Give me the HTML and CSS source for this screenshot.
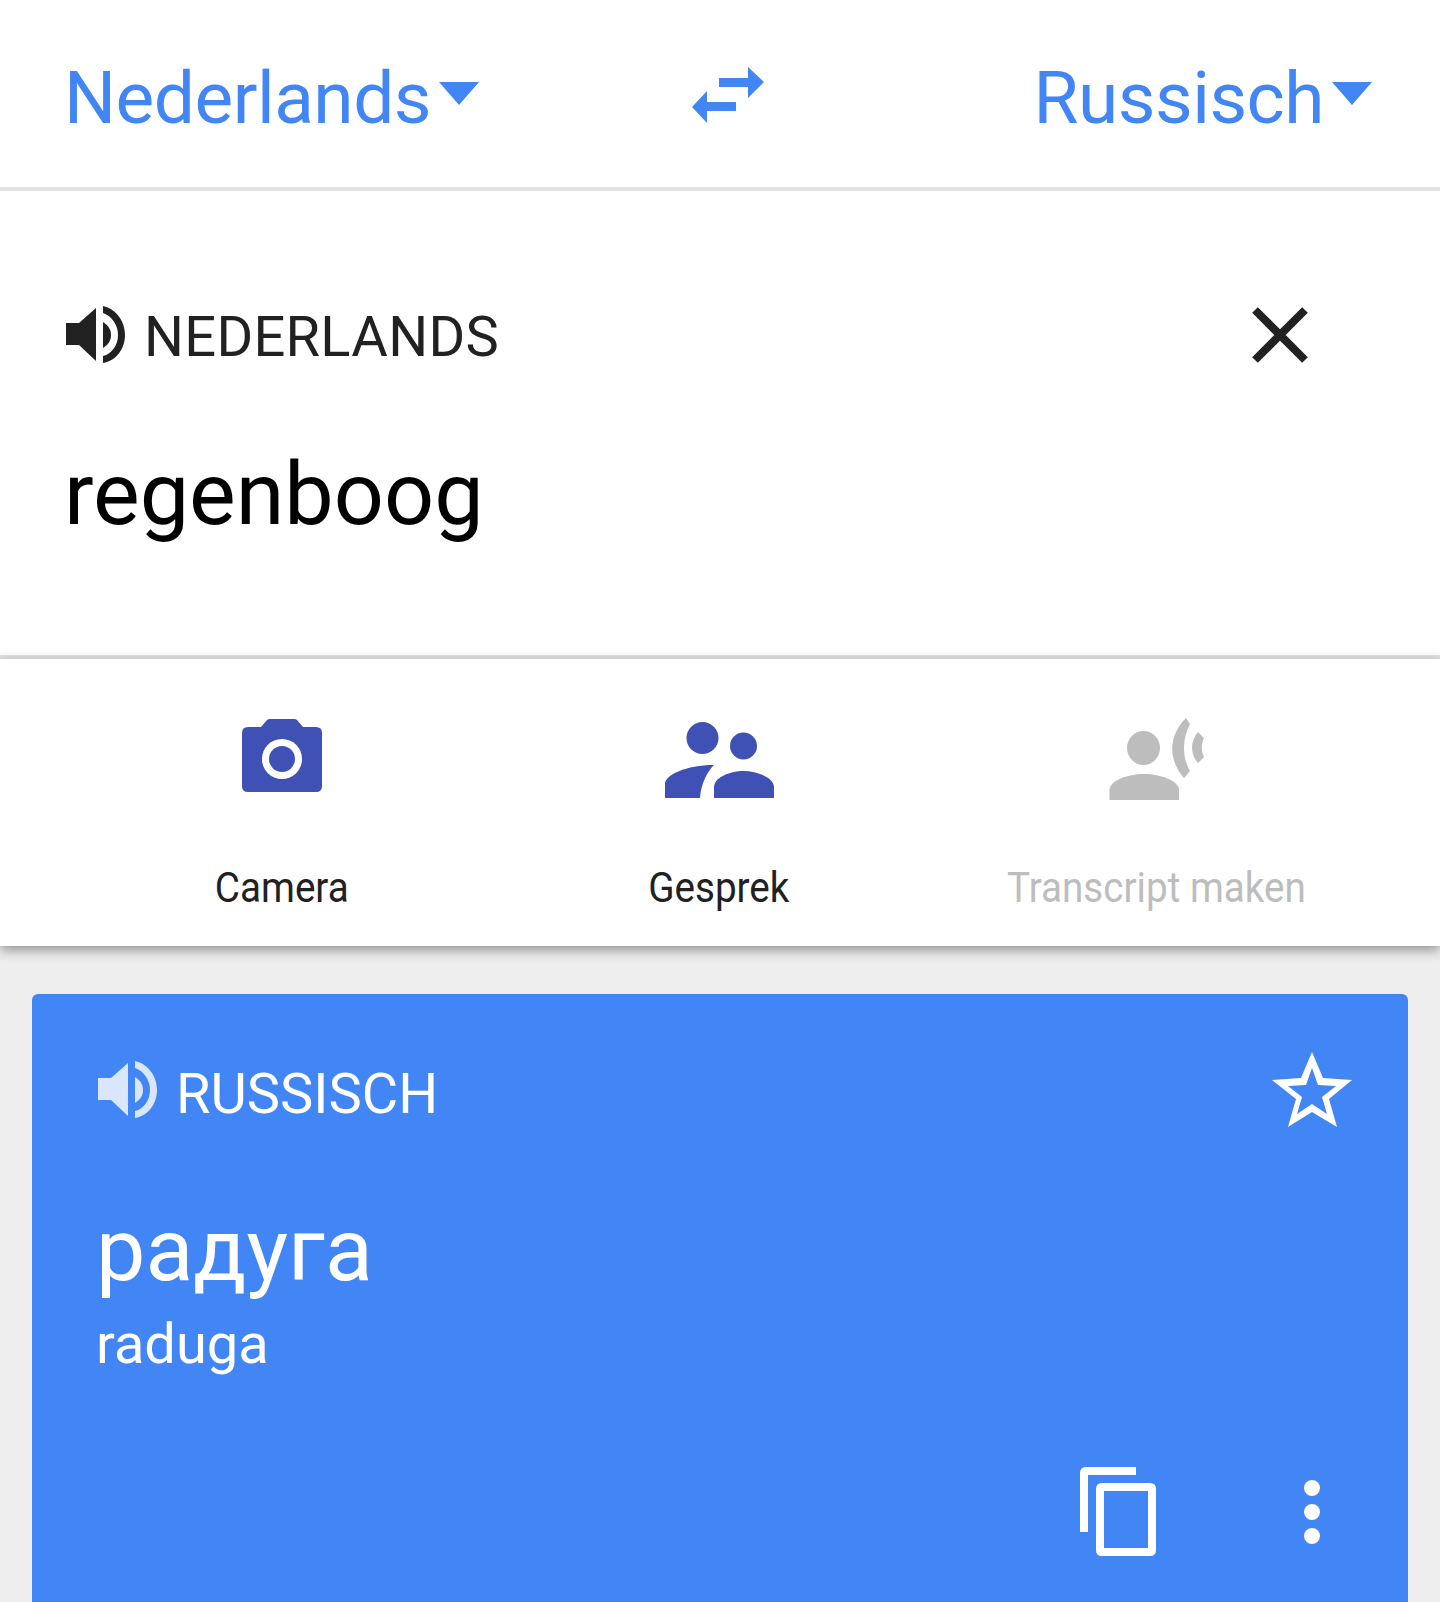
FILE: index.html
```html
<!DOCTYPE html>
<html lang="nl">
<head>
    <meta charset="UTF-8">
    <title>Vertalen</title>
    <link rel="stylesheet" href="styles.css">
</head>
<body>
    <div class="lang-bar">
        <div class="lang-select">
            <span class="lang-name">Nederlands</span>
            <svg class="caret" viewBox="0 0 40 23"><polygon points="0,0 40,0 20,23"/></svg>
        </div>
        <svg class="swap" viewBox="0 0 72 56">
            <polygon points="27,11 56,11 56,0 72,15 56,31 56,20 27,20"/>
            <polygon points="44,35 15,35 15,24 0,40 15,56 15,44 44,44"/>
        </svg>
        <div class="lang-select">
            <span class="lang-name">Russisch</span>
            <svg class="caret" viewBox="0 0 40 23"><polygon points="0,0 40,0 20,23"/></svg>
        </div>
    </div>

    <div class="source">
        <div class="source-head">
            <svg class="speaker" viewBox="0 0 60 58">
                <polygon points="0,17 13,17 30,2 30,55 13,39 0,39"/>
                <path d="M37 16 C43 20 45 24 45 29 C45 34 43 38 37 42 Z"/>
                <path d="M37 0 C50 3 59 15 59 29 C59 43 50 55 37 57 V50 C46 48 52 39 52 29 C52 19 46 10 37 7 Z"/>
            </svg>
            <span class="source-lang">NEDERLANDS</span>
            <svg class="close" viewBox="0 0 56 56"><path d="M3 3 L53 53 M53 3 L3 53"/></svg>
        </div>
        <div class="source-text">regenboog</div>
    </div>

    <div class="tools">
        <div class="tool">
            <svg class="tool-icon" viewBox="0 0 110 82">
                <g transform="translate(15 1)">
                    <path class="indigo" d="M6 8 H19 L25 1 Q26 0 28 0 H52 Q54 0 55 1 L61 8 H74 Q80 8 80 14 V67 Q80 73 74 73 H6 Q0 73 0 67 V14 Q0 8 6 8 Z"/>
                    <circle cx="40" cy="40" r="20" fill="#fff"/>
                    <circle class="indigo" cx="40" cy="40" r="13"/>
                </g>
            </svg>
            <span class="tool-label">Camera</span>
        </div>
        <div class="tool">
            <svg class="tool-icon" viewBox="0 0 110 82">
                <circle class="indigo" cx="38.5" cy="20" r="16"/>
                <circle class="indigo" cx="79.5" cy="28" r="13.5"/>
                <path class="indigo" d="M1 80 V66 C1 57 22 47 50 47 C43 54 37 66 36 80 Z"/>
                <path class="indigo" d="M50 80 V69 C50 60 65 53 79.5 53 C94 53 110 60 110 69 V80 Z"/>
            </svg>
            <span class="tool-label">Gesprek</span>
        </div>
        <div class="tool tool-off">
            <svg class="tool-icon" viewBox="0 0 110 82">
                <g transform="translate(8 0)">
                    <ellipse class="grey" cx="34.5" cy="30" rx="16.5" ry="17"/>
                    <path class="grey" d="M0.5 82 V72 C0.5 63 18 56 35 56 C52 56 70 63 70 72 V82 Z"/>
                    <path class="grey" d="M77 0 L81 6 C73 20 73 40 81 53 L75 60 C59 42 59 18 77 0 Z"/>
                    <path class="grey" d="M89 14 L95 20 C92 26 92 33 95 39 L89 45 C81 36 81 23 89 14 Z"/>
                </g>
            </svg>
            <span class="tool-label">Transcript maken</span>
        </div>
    </div>

    <div class="result-card">
        <div class="result-head">
            <svg class="speaker speaker-light" viewBox="0 0 60 58">
                <polygon points="0,17 13,17 30,2 30,55 13,39 0,39"/>
                <path d="M37 16 C43 20 45 24 45 29 C45 34 43 38 37 42 Z"/>
                <path d="M37 0 C50 3 59 15 59 29 C59 43 50 55 37 57 V50 C46 48 52 39 52 29 C52 19 46 10 37 7 Z"/>
            </svg>
            <span class="result-lang">RUSSISCH</span>
            <svg class="star" viewBox="0 0 80 76">
                <path fill-rule="evenodd" d="M40 0 L51 26 L80 28 L57 47 L65 75 L40 60 L16 75 L24 47 L0 28 L29 26 Z M40 16 L34 33 L16 34 L30 45 L25 62 L40 52 L55 62 L50 45 L64 34 L46 33 Z"/>
            </svg>
        </div>
        <div class="result-text">радуга</div>
        <div class="result-roman">raduga</div>
        <div class="result-actions">
            <svg class="copy" viewBox="0 0 76 90">
                <path d="M56 0 H6 Q0 0 0 6 V65 H8 V8 H56 Z"/>
                <path fill-rule="evenodd" d="M22 16 H70 Q76 16 76 22 V83 Q76 89 70 89 H22 Q16 89 16 83 V22 Q16 16 22 16 Z M24 24 V81 H68 V24 Z"/>
            </svg>
            <div class="more">
                <span class="dot"></span>
                <span class="dot"></span>
                <span class="dot"></span>
            </div>
        </div>
    </div>
</body>
</html>
```

FILE: styles.css
```css
body {
    margin: 0;
    height: 1602px;
    overflow: hidden;
    background-color: #eeeeee;
    font-family: Roboto, "Liberation Sans", sans-serif;
    color: #212121;
}

/* Language bar */
.lang-bar {
    display: flex;
    justify-content: space-between;
    align-items: flex-start;
    height: 187px;
    padding: 0 68px 0 64px;
    background-color: #fff;
    border-bottom: 4px solid #e2e2e2;
}
.lang-select {
    display: flex;
    align-items: flex-start;
    margin-top: 54px;
}
.lang-name {
    font-size: 73px;
    line-height: 88px;
    letter-spacing: -0.5px;
    color: #4285f4;
}
.caret {
    width: 40px;
    height: 23px;
    margin: 28px 0 0 8px;
    fill: #4285f4;
}
.swap {
    width: 72px;
    height: 56px;
    margin-top: 67px;
    margin-right: 57px;
    fill: #4285f4;
}

/* Source text */
.source {
    height: 468px;
    box-sizing: border-box;
    padding: 113px 100px 0 66px;
    background-color: #fff;
    border-bottom: 4px solid #e2e2e2;
}
.source-head,
.result-head {
    display: flex;
    align-items: center;
}
.speaker {
    width: 60px;
    height: 58px;
    fill: #212121;
}
.speaker-light {
    fill: #d9e6fc;
}
.source-lang {
    margin-left: 18px;
    padding-top: 4px;
    font-size: 56px;
    line-height: 58px;
    letter-spacing: 0.3px;
}
.close {
    width: 56px;
    height: 56px;
    margin-left: auto;
    margin-right: 32px;
    fill: none;
    stroke: #212121;
    stroke-width: 8;
}
.source-text {
    margin-top: 74px;
    margin-left: -2px;
    font-size: 88px;
    line-height: 108px;
    color: #000;
}

/* Camera, conversation and transcribe */
.tools {
    display: grid;
    grid-template-columns: repeat(3, 437px);
    justify-content: center;
    height: 287px;
    padding-right: 2px;
    background-color: #fff;
    box-shadow: 0 4px 12px rgba(0, 0, 0, 0.4);
    position: relative;
}
.tool {
    display: flex;
    flex-direction: column;
    align-items: center;
    padding-top: 59px;
}
.tool-icon {
    width: 110px;
    height: 82px;
}
.indigo {
    fill: #3f51b5;
}
.grey {
    fill: #bdbdbd;
}
.tool-label {
    margin-top: 63px;
    font-size: 42px;
    line-height: 50px;
    transform: scaleX(0.92);
    white-space: nowrap;
}
.tool-off .tool-label {
    color: #bdbdbd;
}

/* Translation card */
.result-card {
    margin: 48px 32px 0;
    height: 608px;
    box-sizing: border-box;
    padding: 58px 64px 0 66px;
    background-color: #4285f4;
    border-radius: 6px 6px 0 0;
    color: #fff;
}
.result-lang {
    margin-left: 18px;
    padding-top: 8px;
    font-size: 56px;
    line-height: 58px;
}
.star {
    width: 80px;
    height: 76px;
    margin-left: auto;
    margin-right: -8px;
    fill: #fff;
}
.result-text {
    margin-top: 72px;
    margin-left: -2px;
    font-size: 88px;
    line-height: 100px;
}
.result-roman {
    margin-top: 14px;
    margin-left: -2px;
    font-size: 56px;
    line-height: 60px;
}
.result-actions {
    display: flex;
    align-items: center;
    justify-content: flex-end;
    margin-top: 93px;
}
.copy {
    width: 76px;
    height: 90px;
    fill: #fff;
}
.more {
    display: flex;
    flex-direction: column;
    gap: 8px;
    margin-left: 148px;
    margin-right: 24px;
}
.dot {
    width: 16px;
    height: 16px;
    border-radius: 50%;
    background-color: #fff;
}
```
